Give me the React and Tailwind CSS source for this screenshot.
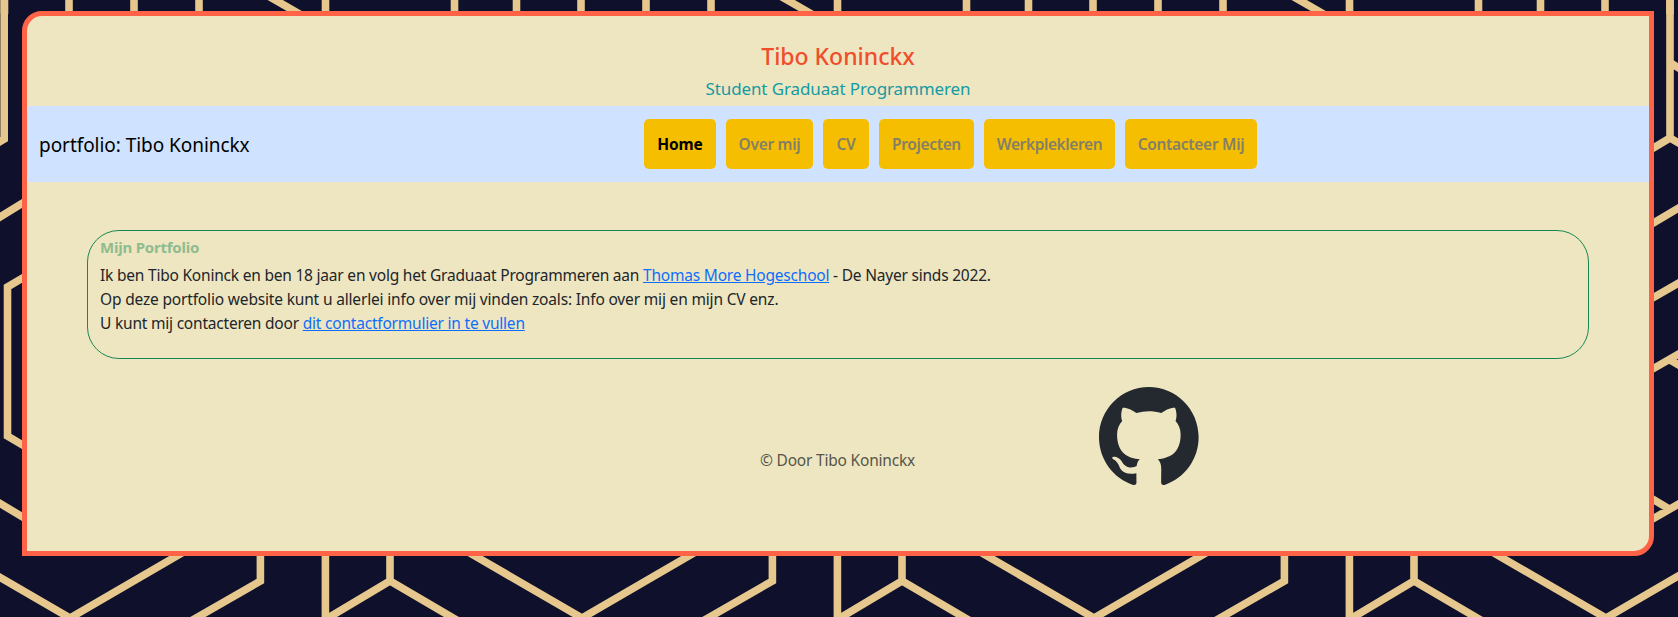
const navItems = [
  { label: 'Home', box: 'w-[72px] text-black font-bold tracking-[-0.1px]' },
  { label: 'Over mij', box: 'w-[87px] text-[#847f68] font-semibold tracking-[-0.3px]' },
  { label: 'CV', box: 'w-[46px] text-[#847f68] font-semibold tracking-[-0.3px]' },
  { label: 'Projecten', box: 'w-[95px] text-[#847f68] font-semibold tracking-[-0.35px]' },
  { label: 'Werkplekleren', box: 'w-[131px] text-[#847f68] font-semibold tracking-[-0.4px]' },
  { label: 'Contacteer Mij', box: 'w-[132px] text-[#847f68] font-semibold tracking-[-0.3px]' },
];

function Backdrop() {
  return (
    <svg className="absolute inset-0 -z-10" width="1678" height="617" viewBox="0 0 1678 617">
      <rect width="1678" height="617" fill="#0f102b" />
      <g fill="none" stroke="#e6c88e" strokeWidth="7.6">
        {[-512, 0, 512, 1024, 1536].map((x) => (
          <g key={x} transform={`translate(${x} 0)`}>
            <path d="M69 0V14M134 0V14M199 0V14M266.5 -5L303 16M325.5 0V14M454.5 0V14M516.5 0V14" />
            <path d="M-55 545.5L70 618L187 550M260.4 550V581L190 621.5M325.4 550V621M325.4 619.5L390 581L460 622M390 550V581" />
          </g>
        ))}
        <path d="M4.2 0V139L-4 144M-4 219.5L26 201M26 276L7.5 287V436L26 447M-4 501L26 519" />
        <path d="M1670 0V137M1670 62.5L1682 70M1650 150L1670 138L1682 145M1650 225L1682 206M1650 299.5L1682 281M1650 370.5L1682 352M1670 360L1682 367M1650 497.5L1670 509.5M1650 520.5L1682 502" />
      </g>
    </svg>
  );
}

function GithubMark() {
  return (
    <svg width="100" height="98" viewBox="0 0 98 96" preserveAspectRatio="none" fill="#24292f">
      <path fillRule="evenodd" clipRule="evenodd" d="M48.854 0C21.839 0 0 22 0 49.217c0 21.756 13.993 40.172 33.405 46.69 2.427.49 3.316-1.059 3.316-2.362 0-1.141-.08-5.052-.08-9.127-13.59 2.934-16.42-5.867-16.42-5.867-2.184-5.704-5.42-7.17-5.42-7.17-4.448-3.015.324-3.015.324-3.015 4.934.326 7.523 5.052 7.523 5.052 4.367 7.496 11.404 5.378 14.235 4.074.404-3.178 1.699-5.378 3.074-6.6-10.839-1.141-22.243-5.378-22.243-24.283 0-5.378 1.94-9.778 5.014-13.2-.485-1.222-2.184-6.275.486-13.038 0 0 4.125-1.304 13.426 5.052a46.97 46.97 0 0 1 12.214-1.63c4.125 0 8.33.571 12.213 1.63 9.302-6.356 13.427-5.052 13.427-5.052 2.67 6.763.97 11.816.485 13.038 3.155 3.422 5.015 7.822 5.015 13.2 0 18.905-11.404 23.06-22.324 24.283 1.78 1.548 3.316 4.481 3.316 9.126 0 6.6-.08 11.897-.08 13.526 0 1.304.89 2.853 3.316 2.364 19.412-6.52 33.405-24.935 33.405-46.691C97.707 22 75.788 0 48.854 0z" />
    </svg>
  );
}

export default function App() {
  return (
    <div className="relative isolate h-[617px] w-[1678px] overflow-hidden px-[22px] pt-[11px] font-['Noto_Sans','Open_Sans',sans-serif] text-[#212529]">
      <Backdrop />
      <div className="flex h-[545px] w-[1632px] flex-col overflow-hidden rounded-tl-[20px] rounded-br-[20px] border-5 border-[#ff6347] bg-[#eee6c1]">
        <header className="flex h-[90px] shrink-0 flex-col items-center whitespace-nowrap pt-[23px]">
          <h1 className="text-[23px] leading-[34px] font-medium tracking-[-0.02px] text-[#f04e2b]">Tibo Koninckx</h1>
          <p className="text-[17px] leading-[32px] tracking-[-0.12px] text-[#159aa3]">Student Graduaat Programmeren</p>
        </header>

        <nav className="flex h-[76px] shrink-0 items-center whitespace-nowrap bg-[#cfe2ff] pl-[12px]">
          <a className="w-[605px] pt-[2px] text-[19px] leading-[30px] tracking-[-0.05px] text-black">portfolio: Tibo Koninckx</a>
          <ul className="flex gap-[10px] text-[15.5px]">
            {navItems.map(({ label, box }) => (
              <li key={label} className={`flex h-[50px] items-center justify-center rounded-[5px] bg-[#f6be00] pt-[2px] ${box}`}>
                {label}
              </li>
            ))}
          </ul>
        </nav>

        <main className="mx-[60px] mt-[48px] h-[129px] shrink-0 whitespace-nowrap rounded-[32px] border border-[#198754] px-[12px] pt-[4px] text-[15.5px] leading-[24px] tracking-[-0.21px]">
          <h2 className="mb-[4px] text-[15px] leading-[24px] font-bold text-[#8fbc8f]">Mijn Portfolio</h2>
          <p>
            Ik ben Tibo Koninck en ben 18 jaar en volg het Graduaat Programmeren aan{' '}
            <a className="text-[#0d6efd] underline">Thomas More Hogeschool</a> - De Nayer sinds 2022.
          </p>
          <p className="tracking-[-0.17px]">Op deze portfolio website kunt u allerlei info over mij vinden zoals: Info over mij en mijn CV enz.</p>
          <p>
            U kunt mij contacteren door <a className="text-[#0d6efd] underline">dit contactformulier in te vullen</a>
          </p>
        </main>

        <footer className="flex h-[126px] shrink-0 items-end pl-[733px]">
          <p className="mb-[13px] w-[339px] text-[15.5px] leading-[24px] tracking-[-0.2px] whitespace-nowrap text-[#555649]">© Door Tibo Koninckx</p>
          <GithubMark />
        </footer>
      </div>
    </div>
  );
}
